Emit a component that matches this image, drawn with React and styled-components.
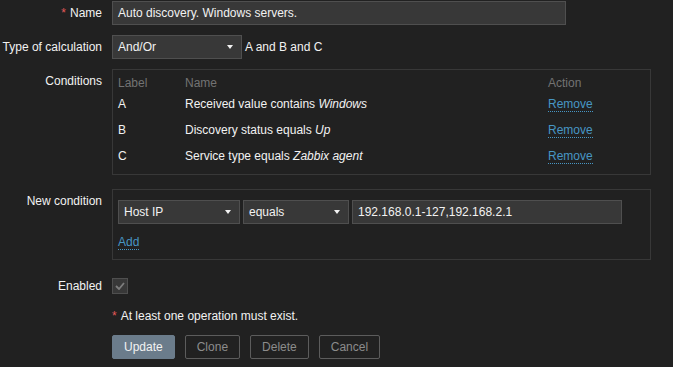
import { createGlobalStyle, styled } from "styled-components";

const GlobalStyle = createGlobalStyle`
  html, body {
    margin: 0;
    background: #212121;
  }
  body {
    font-family: "Liberation Sans", Arial, sans-serif;
    font-size: 12px;
    color: #f2f2f2;
  }
`;

const Form = styled.div`
  padding-top: 1px;
  width: 673px;
  height: 367px;
`;

const Row = styled.div`
  display: grid;
  grid-template-columns: 102px 1fr;
  column-gap: 10px;
  align-items: start;
  margin-top: ${(p) => p.$gap || 0}px;
`;

const Label = styled.div`
  text-align: right;
  line-height: 24px;
  white-space: nowrap;
`;

const Asterisk = styled.span`
  color: #e45959;
  margin-right: 4px;
`;

const Field = styled.div`
  display: flex;
  align-items: center;
  gap: ${(p) => p.$gap || 0}px;
  min-height: 24px;
`;

const TextInput = styled.div`
  box-sizing: border-box;
  width: ${(p) => p.$width}px;
  height: 24px;
  line-height: 22px;
  padding: 0 5px;
  background: #383838;
  border: 1px solid #4f4f4f;
  color: #f2f2f2;
  white-space: nowrap;
`;

const Select = styled(TextInput)`
  position: relative;
  padding-right: 20px;

  &::after {
    content: "";
    position: absolute;
    right: 8px;
    top: 9px;
    border-left: 3px solid transparent;
    border-right: 3px solid transparent;
    border-top: 4px solid #f2f2f2;
  }
`;

const Hint = styled.span`
  margin-left: 3px;
`;

const Box = styled.div`
  box-sizing: border-box;
  width: 539px;
  border: 1px solid #383838;
  padding: ${(p) => p.$pad};
`;

const Table = styled.div`
  display: grid;
  grid-template-columns: 67px 363px 1fr;
`;

const HeadCell = styled.div`
  color: #737373;
  height: 16px;
  line-height: 16px;
`;

const Cell = styled.div`
  height: 26px;
  display: flex;
  align-items: center;
`;

const Link = styled.span`
  color: #4796c4;
  line-height: 14px;
  border-bottom: 1px dotted #4796c4;
  cursor: pointer;
`;

const AddRow = styled.div`
  margin-top: 11px;
  line-height: 14px;
`;

const Checkbox = styled.div`
  box-sizing: border-box;
  width: 16px;
  height: 16px;
  background: #383838;
  border: 1px solid #4f4f4f;
  display: flex;
  align-items: center;
  justify-content: center;
`;

const Note = styled.div`
  line-height: 14px;
`;

const Buttons = styled.div`
  display: flex;
  gap: 10px;
`;

const Button = styled.button`
  box-sizing: border-box;
  height: 24px;
  padding: 0 11px;
  font-family: inherit;
  font-size: 12px;
  border-radius: 2px;
  background: ${(p) => (p.$primary ? "#6b7c8b" : "transparent")};
  border: 1px solid ${(p) => (p.$primary ? "#6b7c8b" : "#5c5c5c")};
  color: ${(p) => (p.$primary ? "#f2f2f2" : "#8c8c8c")};
`;

const conditions = [
  { label: "A", text: "Received value contains ", value: "Windows" },
  { label: "B", text: "Discovery status equals ", value: "Up" },
  { label: "C", text: "Service type equals ", value: "Zabbix agent" },
];

export default function App() {
  return (
    <Form>
      <GlobalStyle />
      <Row>
        <Label>
          <Asterisk>*</Asterisk>Name
        </Label>
        <Field>
          <TextInput $width={454}>Auto discovery. Windows servers.</TextInput>
        </Field>
      </Row>

      <Row $gap={10}>
        <Label>Type of calculation</Label>
        <Field>
          <Select $width={130}>And/Or</Select>
          <Hint>A and B and C</Hint>
        </Field>
      </Row>

      <Row $gap={10}>
        <Label>Conditions</Label>
        <Box $pad="5px">
          <Table>
            <HeadCell>Label</HeadCell>
            <HeadCell>Name</HeadCell>
            <HeadCell>Action</HeadCell>
            {conditions.map((c) => (
              <>
                <Cell key={c.label + "l"}>{c.label}</Cell>
                <Cell key={c.label + "n"}>
                  {c.text}
                  <i>&nbsp;{c.value}</i>
                </Cell>
                <Cell key={c.label + "a"}>
                  <Link>Remove</Link>
                </Cell>
              </>
            ))}
          </Table>
        </Box>
      </Row>

      <Row $gap={14}>
        <Label>New condition</Label>
        <Box $pad="10px 5px 10px">
          <Field $gap={3}>
            <Select $width={122}>Host IP</Select>
            <Select $width={106}>equals</Select>
            <TextInput $width={270}>192.168.0.1-127,192.168.2.1</TextInput>
          </Field>
          <AddRow>
            <Link>Add</Link>
          </AddRow>
        </Box>
      </Row>

      <Row $gap={14}>
        <Label>Enabled</Label>
        <Field>
          <Checkbox>
            <svg width="10" height="8" viewBox="0 0 10 8">
              <polyline
                points="1,4 4,7 9,1"
                fill="none"
                stroke="#7d7d7d"
                strokeWidth="1.8"
              />
            </svg>
          </Checkbox>
        </Field>
      </Row>

      <Row $gap={11}>
        <div />
        <Note>
          <Asterisk>*</Asterisk>At least one operation must exist.
        </Note>
      </Row>

      <Row $gap={12}>
        <div />
        <Buttons>
          <Button $primary>Update</Button>
          <Button>Clone</Button>
          <Button>Delete</Button>
          <Button>Cancel</Button>
        </Buttons>
      </Row>
    </Form>
  );
}
